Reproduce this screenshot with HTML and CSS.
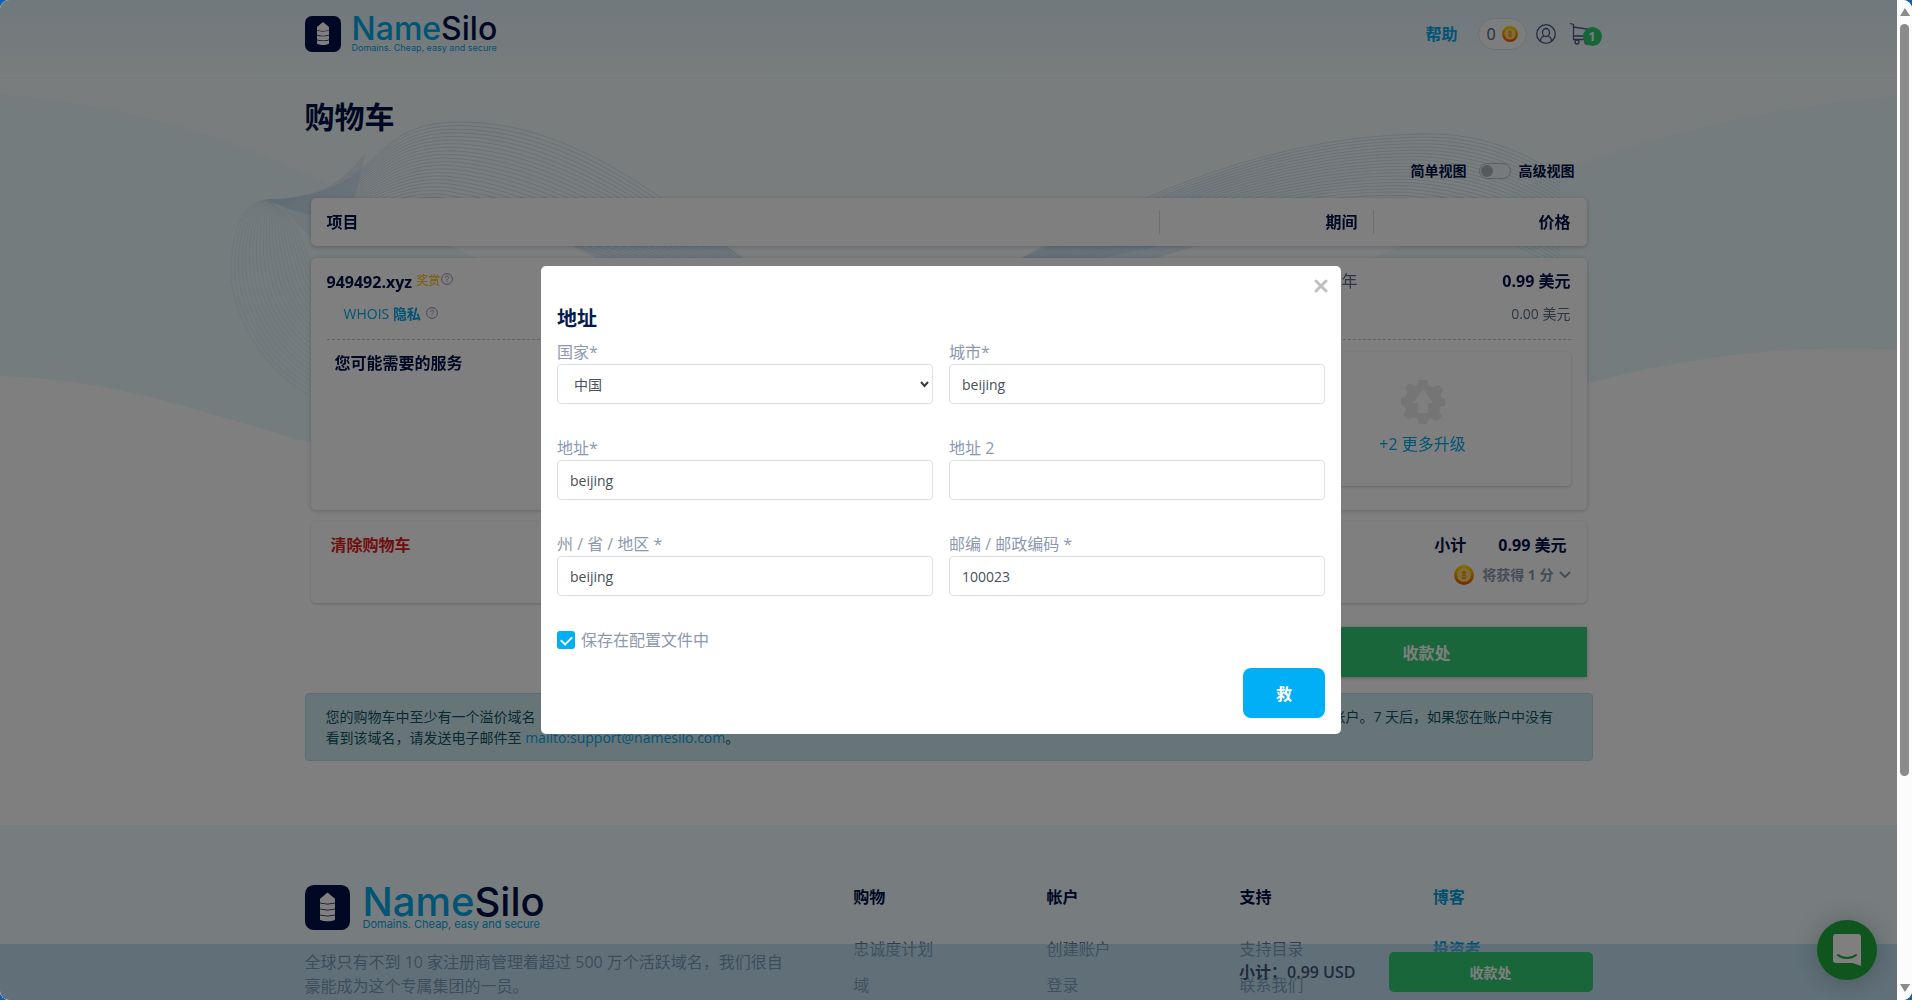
FILE: index.html
```html
<!DOCTYPE html>
<html lang="zh-CN">
<head>
    <meta charset="UTF-8">
    <title>购物车 - NameSilo</title>
    <link rel="stylesheet" href="styles.css">
</head>
<body>
<svg class="defs" width="0" height="0">
    <defs>
        <linearGradient id="gold" x1="0" y1="0" x2="0" y2="1">
            <stop offset="0" stop-color="#ffd800"/>
            <stop offset="1" stop-color="#f05a00"/>
        </linearGradient>
        <linearGradient id="fold" x1="0" y1="1" x2="1" y2="0">
            <stop offset="0" stop-color="#cfe4f8"/>
            <stop offset="1" stop-color="#eef7fc" stop-opacity="0"/>
        </linearGradient>
        <symbol id="silo" viewBox="0 0 36 36">
            <rect width="36" height="36" rx="7" fill="#001047"/>
            <path d="M12 11L18 6l6 5V14c-3.500 1.200-8.500 1.200-12 0z" fill="#fff"/>
            <path d="M12 14.600c3.500 1.200 8.500 1.200 12 0v4.200c-3.500 1.200-8.500 1.200-12 0z" fill="#fff"/>
            <path d="M12 19.400c3.500 1.200 8.500 1.200 12 0v4.200c-3.500 1.200-8.500 1.200-12 0z" fill="#fff"/>
            <path d="M12 24.200c3.500 1.200 8.500 1.200 12 0v3.600c-3.500 1.600-8.500 1.600-12 0z" fill="#fff"/>
        </symbol>
        <symbol id="coin" viewBox="0 0 20 20">
            <circle cx="10" cy="10" r="8.500" fill="#ffd978" stroke="url(#gold)" stroke-width="3"/>
            <path d="M8 7l2-1.500L12 7v7H8z" fill="#f59a00"/>
            <path d="M8 9.300h4M8 11.700h4" stroke="#ffd978" stroke-width=".6"/>
        </symbol>
        <symbol id="help" viewBox="0 0 12 12">
            <circle cx="6" cy="6" r="5.400" fill="none" stroke="#8c98b0"/>
            <path d="M4.300 4.800c0-2.300 3.400-2.200 3.400-.3C7.700 5.700 6 5.700 6 7.200M6 8.300v1" fill="none" stroke="#8c98b0"/>
        </symbol>
    </defs>
</svg>
<div class="window">
    <div class="page">
        <svg class="waves" viewBox="0 0 1897 460" preserveAspectRatio="none">
            <path d="M0 94C120 104 240 138 330 186C450 250 560 300 700 330L500 460C440 460 380 462 311 443C200 412 120 380 0 376z" fill="#ebf8fc"/>
            <path d="M1897 96C1740 108 1610 150 1530 184C1400 250 1340 280 1200 300L1400 450C1560 385 1700 340 1897 350z" fill="#ebf8fc"/>
            <path d="M268 200C330 196 345 178 366 152C356 190 350 240 320 245C300 230 290 210 268 200z" fill="#deecf8"/>
            <path d="M1160 198C1110 224 1060 240 1018 260H1150C1220 240 1300 210 1420 150C1330 130 1240 160 1160 198z" fill="url(#fold)"/>
            <path d="M560 240L600 260H748L690 222z" fill="#ddecfa"/>
            <g id="mesh" fill="none" stroke="#c2dae8" stroke-width="1"></g>
        </svg>
        <header class="header">
            <div class="container bar">
                <a class="logo" href="#">
                    <svg class="logo-mark" viewBox="0 0 36 36"><use href="#silo"/></svg>
                    <span class="logo-text">
                        <span class="logo-name">Name<b>Silo</b></span>
                        <span class="logo-tag">Domains. Cheap, easy and secure</span>
                    </span>
                </a>
                <nav class="nav">
                    <a class="help" href="#">帮助</a>
                    <a class="points" href="#">0 <svg class="coin-small"><use href="#coin"/></svg></a>
                    <a class="user" href="#" aria-label="帐户">
                        <svg width="20" height="20" viewBox="0 0 20 20" fill="none" stroke="#4b5885" stroke-width="1.300">
                            <circle cx="10" cy="10" r="9.300"/>
                            <ellipse cx="10" cy="8.500" rx="3.500" ry="4"/>
                            <path d="M4.500 17c0-3 1.500-4.300 3.800-5M15.500 17c0-3-1.500-4.300-3.800-5"/>
                        </svg>
                    </a>
                    <a class="cart-link" href="#" aria-label="购物车">
                        <svg width="24" height="24" viewBox="0 0 24 24" fill="none" stroke="#4b5885" stroke-width="1.300">
                            <path d="M1 1.500l3.500 1V17.500H20M4.500 5L21 7.500V14H4.500"/>
                            <circle cx="8" cy="20" r="2"/>
                            <circle cx="18" cy="20" r="2"/>
                        </svg>
                        <span class="count">1</span>
                    </a>
                </nav>
            </div>
        </header>
        <main class="container main">
            <h1>购物车</h1>
            <div class="view">
                <label for="view">简单视图</label>
                <input type="checkbox" id="view" class="switch">
                <label for="view">高级视图</label>
            </div>
            <div class="cart">
                <table class="items">
                    <thead>
                        <tr>
                            <th class="col-item">项目</th>
                            <th class="col-period">期间</th>
                            <th class="col-price">价格</th>
                        </tr>
                    </thead>
                    <tbody>
                        <tr class="row-domain">
                            <td><strong>949492.xyz</strong> <span class="reward">奖赏<svg class="hint"><use href="#help"/></svg></span></td>
                            <td>1 年</td>
                            <td><strong>0.99 美元</strong></td>
                        </tr>
                        <tr class="row-whois">
                            <td><a href="#">WHOIS <b>隐私</b></a> <svg class="hint"><use href="#help"/></svg></td>
                            <td></td>
                            <td>0.00 美元</td>
                        </tr>
                        <tr class="row-services">
                            <td colspan="3">
                                <div class="services">
                                    <h2>您可能需要的服务</h2>
                                    <a class="upgrade" href="#">
                                        <svg width="44" height="44" viewBox="0 0 44 44">
                                            <path d="M18 0h8l1.500 5.500 4.500 2 5-3 5.500 5.500-3 5 1 3 4 .5v7l-4.500 1-2 4.500 3 5-5.500 5.500-5-3-3.500 1.500L26 44h-8l-1.500-5-4-2-5 3L2 34.500l3-5L3.500 26 0 25v-7l4.500-1.500 2-4.500-3-4.500L9 3l4.500 3 3-1z" fill="#ebebeb"/>
                                            <path d="M22 9l10 14h-5v10H17V23h-5z" fill="#fff"/>
                                        </svg>
                                        <span>+2 更多升级</span>
                                    </a>
                                </div>
                            </td>
                        </tr>
                    </tbody>
                </table>
                <section class="total">
                    <a class="clear" href="#">清除购物车</a>
                    <div class="sums">
                        <div class="subtotal"><span>小计</span><span>0.99 美元</span></div>
                        <div class="earn">
                            <svg class="coin"><use href="#coin"/></svg>
                            <span>将获得 1 分</span>
                            <svg width="12" height="8" viewBox="0 0 12 8" fill="none" stroke="#8c98b0" stroke-width="2"><path d="M1 1l5 5 5-5"/></svg>
                        </div>
                    </div>
                </section>
                <button class="checkout" type="button">收款处</button>
            </div>
            <p class="alert">您的购物车中至少有一个溢价域名 （溢价域名需要更长的处理时间），最多可能需要 7 天才能完成注册，届时该域名将会显示并添加到您的帐户之中，请您耐心等待账户。7 天后，如果您在账户中没有看到该域名，请发送电子邮件至 <a href="mailto:support@namesilo.com">mailto:support@namesilo.com</a>。</p>
        </main>
        <footer class="footer">
            <div class="container footer-grid">
                <div class="about">
                    <a class="logo logo-big" href="#">
                        <svg class="logo-mark" viewBox="0 0 36 36"><use href="#silo"/></svg>
                        <span class="logo-text">
                            <span class="logo-name">Name<b>Silo</b></span>
                            <span class="logo-tag">Domains. Cheap, easy and secure</span>
                        </span>
                    </a>
                    <p>全球只有不到 10 家注册商管理着超过 500 万个活跃域名，我们很自豪能成为这个专属集团的一员。</p>
                </div>
                <ul>
                    <li>购物</li>
                    <li><a href="#">忠诚度计划</a></li>
                    <li><a href="#">域</a></li>
                </ul>
                <ul>
                    <li>帐户</li>
                    <li><a href="#">创建账户</a></li>
                    <li><a href="#">登录</a></li>
                </ul>
                <ul>
                    <li>支持</li>
                    <li><a href="#">支持目录</a></li>
                    <li><a href="#">联系我们</a></li>
                </ul>
                <ul class="blue">
                    <li><a href="#">博客</a></li>
                    <li><a href="#">投资者</a></li>
                </ul>
            </div>
        </footer>
        <div class="sticky">
            <div class="container sticky-row">
                <span>小计：0.99 USD</span>
                <button type="button">收款处</button>
            </div>
        </div>
        <button class="chat" type="button" aria-label="聊天">
            <svg width="28" height="32" viewBox="0 0 28 32">
                <path d="M3 0h22a3 3 0 0 1 3 3v29l-8-3H3a3 3 0 0 1-3-3V3a3 3 0 0 1 3-3z" fill="#fff"/>
                <path d="M5 21c5 4 13 4 18 0" fill="none" stroke="#1caa3c" stroke-width="2" stroke-linecap="round"/>
            </svg>
        </button>
        <div class="overlay">
            <form class="modal">
                <button class="close" type="button" aria-label="关闭">
                    <svg width="14" height="14" viewBox="0 0 14 14" stroke="#c0c0c0" stroke-width="3" stroke-linecap="round"><path d="M2 2l10 10M12 2L2 12"/></svg>
                </button>
                <h3>地址</h3>
                <div class="fields">
                    <div class="field">
                        <label for="country">国家*</label>
                        <div class="select">
                            <select id="country"><option>中国</option></select>
                            <svg width="9" height="7" viewBox="0 0 9 7" fill="none" stroke="#333b47" stroke-width="2"><path d="M1 1l3.500 4L8 1"/></svg>
                        </div>
                    </div>
                    <div class="field">
                        <label for="city">城市*</label>
                        <input type="text" id="city" value="beijing">
                    </div>
                    <div class="field">
                        <label for="address">地址*</label>
                        <input type="text" id="address" value="beijing">
                    </div>
                    <div class="field">
                        <label for="address2">地址 2</label>
                        <input type="text" id="address2" value="">
                    </div>
                    <div class="field">
                        <label for="state">州 / 省 / 地区 *</label>
                        <input type="text" id="state" value="beijing">
                    </div>
                    <div class="field">
                        <label for="zip">邮编 / 邮政编码 *</label>
                        <input type="text" id="zip" value="100023">
                    </div>
                </div>
                <div class="save-profile">
                    <input type="checkbox" id="profile" checked>
                    <label for="profile">保存在配置文件中</label>
                </div>
                <button class="save" type="button">救</button>
            </form>
        </div>
    </div>
    <div class="scrollbar">
        <svg width="10" height="8" viewBox="0 0 10 8"><path d="M5 0l5 8H0z" fill="#8b8b8b"/></svg>
        <div class="track"><div class="thumb"></div></div>
        <svg width="10" height="8" viewBox="0 0 10 8"><path d="M0 0h10L5 8z" fill="#8b8b8b"/></svg>
    </div>
</div>
<script src="mesh.js"></script>
</body>
</html>
```

FILE: styles.css
```css
*{
    box-sizing: border-box;
    margin: 0;
    padding: 0;
}
body{
    font-family: "Open Sans", "Noto Sans CJK SC", sans-serif;
    font-size: 16px;
    line-height: 24px;
    color: #5d6b8a;
    background: #0a62ad;
}
a{
    color: #00a8ec;
    text-decoration: none;
}
ul{
    list-style: none;
}
button,
input,
select{
    font-family: inherit;
}
button{
    border: 0;
    cursor: pointer;
}
.defs{
    position: absolute;
}
.window{
    display: grid;
    grid-template-columns: 1fr 15px;
    height: 100vh;
    border-radius: 9px;
    overflow: hidden;
    background: #fff;
}
.page{
    position: relative;
    overflow: hidden;
    background: linear-gradient(#e2f2f9 0, #f2fafb 78px, #f7fcfd 260px, #fff 370px);
}
.waves{
    position: absolute;
    top: 0;
    left: 0;
    width: 100%;
    height: 460px;
}
.container{
    position: relative;
    width: 100%;
    max-width: 1288px;
    margin: 0 auto;
}

/* header */
.header{
    position: relative;
    height: 78px;
    border-bottom: 1px solid #ebf2f3;
}
.bar{
    display: flex;
    justify-content: space-between;
    padding-top: 14px;
}
.logo{
    display: flex;
    align-items: center;
    gap: 11px;
    font-family: Inter, sans-serif;
    color: #00a8e8;
}
.logo-mark{
    width: 36px;
    height: 36px;
}
.logo-text{
    display: flex;
    flex-direction: column;
}
.logo-name{
    font-size: 32px;
    line-height: 28px;
    font-weight: 500;
}
.logo-name b{
    font-weight: 500;
    color: #001047;
}
.logo-tag{
    font-size: 9px;
    line-height: 10px;
}
.nav{
    display: flex;
    align-items: center;
    height: 40px;
}
.help{
    font-weight: bold;
    margin-right: 20px;
}
.points{
    display: flex;
    align-items: center;
    justify-content: center;
    gap: 6px;
    width: 49px;
    height: 32px;
    margin-right: 9px;
    border: 1px solid #dde2e4;
    border-radius: 16px;
    background: #f8fafb;
    color: #4b5885;
}
.coin-small{
    width: 16px;
    height: 16px;
}
.user,
.cart-link{
    display: flex;
}
.cart-link{
    position: relative;
    margin-left: 13px;
}
.count{
    position: absolute;
    top: 5px;
    right: -9px;
    width: 19px;
    height: 19px;
    border-radius: 50%;
    background: #2ecc71;
    color: #fff;
    font-size: 12px;
    line-height: 19px;
    font-weight: bold;
    text-align: center;
}

/* cart */
.main{
    padding-top: 21px;
}
h1{
    font-size: 30px;
    line-height: 36px;
    color: #001047;
}
.view{
    display: flex;
    align-items: center;
    justify-content: flex-end;
    gap: 8px;
    height: 24px;
    margin: 24px 18px 15px 0;
    font-size: 14px;
    font-weight: bold;
    color: #001047;
}
.switch{
    appearance: none;
    width: 32px;
    height: 16px;
    margin-left: 4px;
    padding: 1px;
    border: 1px solid #b9c1c5;
    border-radius: 8px;
    background: #eef4f6;
}
.switch::before{
    content: "";
    display: block;
    width: 12px;
    height: 12px;
    border-radius: 50%;
    background: #adb5bd;
}
.cart{
    display: flex;
    flex-direction: column;
    margin: 0 6px;
}
.items{
    width: 100%;
    border-collapse: separate;
    border-spacing: 0;
    table-layout: fixed;
    filter: drop-shadow(0 1px 2px rgba(0,0,0,.2));
}
.items th,
.items td{
    background: #fff;
    padding: 0 16px;
    text-align: right;
}
.items th:first-child,
.items td:first-child{
    text-align: left;
}
.items th{
    height: 48px;
    color: #001047;
}
.items th + th{
    background: linear-gradient(#ddd, #ddd) 0 12px / 1px 24px no-repeat #fff;
}
.items .col-item{
    width: 66.5%;
    border-radius: 5px 0 0 5px;
}
.items .col-period{
    width: 16.8%;
}
.items .col-price{
    border-radius: 0 5px 5px 0;
}
.items tbody::before{
    content: "";
    display: block;
    height: 12px;
}
.items strong{
    color: #001047;
}
.items .row-domain td{
    height: 42px;
    padding-top: 4px;
}
.row-domain td:first-child{
    border-top-left-radius: 5px;
}
.row-domain td:last-child{
    border-top-right-radius: 5px;
}
.reward{
    font-size: 12px;
    vertical-align: 3px;
    color: #ffb400;
}
.hint{
    width: 12px;
    height: 12px;
    margin-left: 1px;
}
.items .row-whois td{
    height: 39px;
    padding-bottom: 12px;
    font-size: 14px;
}
.items .row-whois td:first-child{
    padding-left: 33px;
}
.items .row-services td{
    padding: 0 16px;
    border-radius: 0 0 5px 5px;
}
.services{
    display: flex;
    justify-content: space-between;
    height: 171px;
    padding-top: 12px;
    border-top: 1px dashed #c4c4c4;
}
.services h2{
    padding-left: 8px;
    font-size: 16px;
    line-height: 22px;
    color: #001047;
}
.upgrade{
    display: flex;
    flex-direction: column;
    align-items: center;
    gap: 8px;
    width: 296px;
    height: 134px;
    padding-top: 28px;
    border-radius: 4px;
    box-shadow: 0 1px 3px rgba(0,0,0,.2);
}
.total{
    display: flex;
    justify-content: space-between;
    height: 82px;
    margin-top: 11px;
    padding: 12px 20px;
    border-radius: 5px;
    background: #fff;
    box-shadow: 0 1px 3px rgba(0,0,0,.2);
}
.clear{
    color: #e0201c;
    font-weight: bold;
}
.subtotal{
    display: flex;
    justify-content: flex-end;
    gap: 32px;
    font-weight: bold;
    color: #001047;
}
.earn{
    display: flex;
    align-items: center;
    justify-content: flex-end;
    gap: 5px;
    height: 36px;
    margin-right: -4px;
    font-size: 14px;
    color: #8c98b0;
    font-weight: bold;
}
.coin{
    width: 20px;
    height: 20px;
    margin-right: 3px;
}
.checkout{
    align-self: flex-end;
    width: 320px;
    height: 50px;
    margin-top: 24px;
    background: #30cc72;
    box-shadow: 0 1px 4px rgba(0,0,0,.25);
    color: #fff;
    font-size: 16px;
    font-weight: bold;
}
.alert{
    margin: 16px 0 64px;
    padding: 12px 28px 12px 20px;
    border: 1px solid #b4dfe7;
    border-radius: 4px;
    background: #d1eaf1;
    color: #0c5460;
    font-size: 14px;
    line-height: 21px;
}

/* footer */
.footer{
    position: relative;
    padding: 60px 0;
    background: #eef9fd;
}
.footer-grid{
    display: grid;
    grid-template-columns: 42.6% 15% 15% 15% 1fr;
}
.about p{
    margin-top: 20px;
    padding-right: 60px;
}
.logo-big{
    gap: 13px;
}
.logo-big .logo-mark{
    width: 45px;
    height: 45px;
}
.logo-big .logo-name{
    font-size: 40px;
    line-height: 34px;
}
.logo-big .logo-tag{
    font-size: 11px;
    line-height: 11px;
}
.footer a{
    color: #6a7793;
}
.footer li{
    margin-bottom: 12px;
}
.footer li:first-child{
    margin-bottom: 28px;
    font-weight: bold;
    color: #001047;
}
.footer .blue a{
    color: #00a0e0;
    font-weight: bold;
}
.footer .logo{
    color: #00a8e8;
}
.sticky{
    position: absolute;
    left: 0;
    right: 0;
    bottom: 0;
    height: 56px;
    background: rgba(150,202,229,.5);
}
.sticky-row{
    display: flex;
    align-items: center;
    justify-content: flex-end;
    gap: 33px;
    height: 56px;
    font-weight: 600;
    color: #44527a;
}
.sticky button{
    width: 204px;
    height: 40px;
    border-radius: 5px;
    background: #30cc72;
    color: #fff;
    font-size: 14px;
    font-weight: bold;
}
.chat{
    position: absolute;
    right: 20px;
    bottom: 20px;
    display: flex;
    align-items: center;
    justify-content: center;
    width: 60px;
    height: 60px;
    border-radius: 50%;
    background: #1caa3c;
    box-shadow: 0 2px 24px rgba(0,0,0,.25);
}

/* address dialog */
.overlay{
    position: absolute;
    inset: 0;
    display: flex;
    align-items: center;
    justify-content: center;
    padding-right: 15px;
    background: rgba(0,0,0,.5);
}
.modal{
    position: relative;
    display: flex;
    flex-direction: column;
    width: 800px;
    padding: 40px 16px 16px;
    border-radius: 5px;
    background: #fff;
    color: #8c98b0;
}
.close{
    position: absolute;
    top: 10px;
    right: 10px;
    display: flex;
    align-items: center;
    justify-content: center;
    width: 20px;
    height: 20px;
    background: none;
}
.modal h3{
    margin-bottom: 8px;
    font-size: 20px;
    line-height: 26px;
    color: #001b50;
}
.fields{
    display: grid;
    grid-template-columns: 1fr 1fr;
    gap: 32px 16px;
}
.field label{
    display: block;
}
.field input,
.field select{
    display: block;
    width: 100%;
    height: 40px;
    padding: 0 12px;
    border: 1px solid #dcdfe3;
    border-radius: 4px;
    background: #fff;
    color: #495057;
    font-size: 14px;
}
.field select{
    appearance: none;
    padding-left: 16px;
}
.select{
    position: relative;
}
.select svg{
    position: absolute;
    top: 17px;
    right: 4px;
    pointer-events: none;
}
.save-profile{
    display: flex;
    align-items: center;
    gap: 6px;
    margin: 32px 0 16px;
}
.save-profile input{
    appearance: none;
    width: 18px;
    height: 18px;
    border-radius: 3px;
    background: #00aff5;
}
.save-profile input:checked::before{
    content: "";
    display: block;
    width: 5px;
    height: 9px;
    margin: 3px 6px;
    border: solid #fff;
    border-width: 0 2px 2px 0;
    transform: rotate(45deg);
}
.save{
    align-self: flex-end;
    width: 82px;
    height: 50px;
    border-radius: 8px;
    background: #00aff5;
    color: #fff;
    font-size: 16px;
    font-weight: bold;
}

/* window scrollbar */
.scrollbar{
    display: flex;
    flex-direction: column;
    align-items: center;
    gap: 8px;
    padding: 8px 0;
    background: #fcfcfc;
}
.track{
    flex: 1;
    width: 9px;
}
.thumb{
    height: 79%;
    border-radius: 5px;
    background: #8b8b8b;
}
```

FILE: mesh.js
```js
// thin wave lines behind the cart, each set runs from one curve to another
var oMesh = document.getElementById('mesh');
var aSets = [
    {
        from: [268,200, 390,196, 360,122, 460,122, 580,122, 680,210, 780,290],
        to: [268,200, 360,240, 380,200, 440,205, 520,220, 600,262, 700,280],
        count: 24
    },
    {
        from: [268,200, 240,200, 231,240, 231,270, 231,320, 270,380, 320,400],
        to: [268,200, 300,220, 300,240, 310,260, 320,290, 330,300, 360,320],
        count: 22
    },
    {
        from: [1018,260, 1150,190, 1280,134, 1430,134, 1480,134, 1520,150, 1560,175],
        to: [1060,265, 1200,240, 1300,210, 1400,215, 1480,225, 1530,250, 1560,270],
        count: 26
    }
];
var sHtml = '';
for(var i=0;i<aSets.length;i++){
    var oSet = aSets[i];
    for(var j=0;j<oSet.count;j++){
        var t = j/(oSet.count-1);
        var p = [];
        for(var k=0;k<oSet.from.length;k++){
            p.push(Math.round((oSet.from[k]+(oSet.to[k]-oSet.from[k])*t)*10)/10);
        }
        sHtml += '<path d="M'+p.slice(0,2)+'C'+p.slice(2)+'" opacity="'+(i==1?0.4:0.7)+'"/>';
    }
}
oMesh.innerHTML = sHtml;
```
